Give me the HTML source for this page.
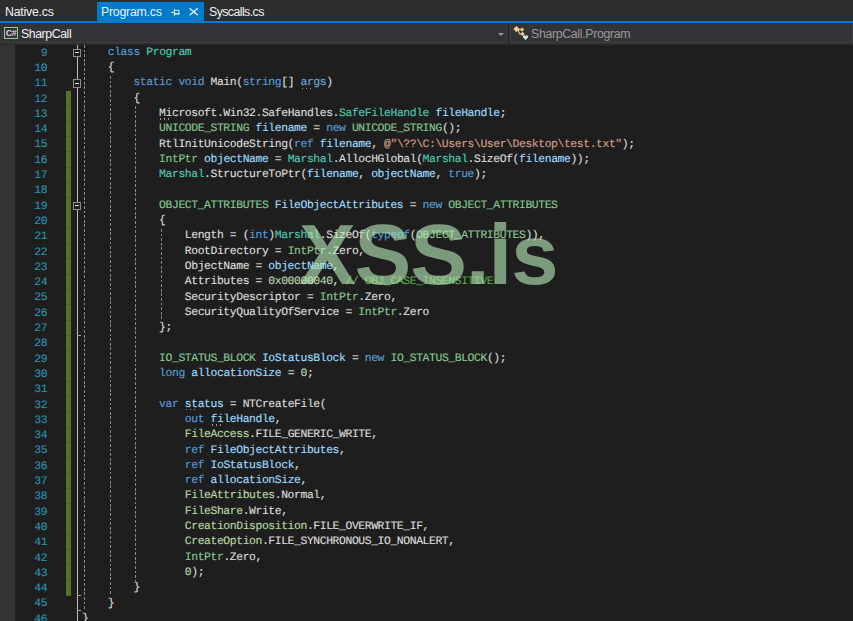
<!DOCTYPE html>
<html><head><meta charset="utf-8"><title>SharpCall</title>
<style>
html,body{margin:0;padding:0}
body{width:853px;height:621px;overflow:hidden;background:#1e1e1e;position:relative;font-family:"Liberation Sans",sans-serif}
#tabs{position:absolute;left:0;top:0;width:853px;height:21px;background:#2d2d30}
#blue{position:absolute;left:0;top:20.6px;width:853px;height:2.6px;background:#007acc}
.tab{position:absolute;top:2px;height:19px;font-size:12.3px;letter-spacing:-0.22px;line-height:20px;color:#f1f1f1;white-space:nowrap}
#tab2{left:97px;width:107px;background:#007acc}
#nav{position:absolute;left:0;top:23.2px;width:853px;height:21.7px;background:#2d2d30}
.combo{position:absolute;top:0.4px;height:19.8px;background:#333337;border:1px solid #3f3f44;border-top-color:#333337;box-sizing:border-box}
.navt{position:absolute;top:0.8px;font-size:12.3px;line-height:20px;white-space:nowrap}
#margin{position:absolute;left:0;top:44.9px;width:15px;height:577px;background:#333333}
#green{position:absolute;left:66px;top:91px;width:4.6px;height:504.8px;background:repeating-linear-gradient(to bottom,rgba(0,0,0,0) 0,rgba(0,0,0,0) 14.4px,rgba(0,0,0,0.13) 14.4px,rgba(0,0,0,0.13) 15.3px),#547229}
#oline{position:absolute;left:77px;top:44.9px;width:1px;height:577px;background:#bdbdbd}
.guide{position:absolute;width:1px;background:repeating-linear-gradient(to bottom,#8c8c8c 0,#8c8c8c 2.8px,transparent 2.8px,transparent 4.6px)}
.box{position:absolute;left:72.8px;width:8.5px;height:8.5px;box-sizing:border-box;border:1px solid #8f8b8b;background:#1e1e1e}
.box i{position:absolute;left:1.3px;top:2.7px;width:4px;height:1.1px;background:#e0e0e0}
.tick{position:absolute;left:77px;width:4px;height:1px;background:#a0a0a0}
.ln,.cl{position:absolute;font-family:"Liberation Mono",monospace;font-size:11.4px;line-height:15.3px;height:15.3px;letter-spacing:-0.41px;white-space:pre;text-rendering:geometricPrecision;-webkit-text-stroke:0.15px}
.ln{left:15px;width:32.2px;text-align:right;color:#2b91af}
.cl{left:82px;color:#dcdcdc}
.k{color:#569cd6}.t{color:#4ec9b0}.s{color:#86c691}.e{color:#b8d7a3}.v{color:#9cdcfe}.d{color:#dcdcdc}
.str{color:#d69d85}.n{color:#b5cea8}.c{color:#57a64a}
.fu{color:#6ea6d3}
.du{color:#dcdcdc}
.vu{color:#9cdcfe}
.dots{position:absolute;width:10px;height:1.2px;background:repeating-linear-gradient(to right,#9a9a9a 0,#9a9a9a 1.4px,transparent 1.4px,transparent 3.95px)}
#wm{position:absolute;left:298.9px;top:205.4px;font-family:"Liberation Sans",sans-serif;font-weight:bold;font-size:85px;line-height:100px;color:rgba(187,237,187,0.6);white-space:nowrap;letter-spacing:-1px}
</style></head><body>
<div id="tabs">
 <div class="tab" style="left:5px">Native.cs</div>
 <div class="tab" id="tab2"><span style="position:absolute;left:4px">Program.cs</span>
  <svg style="position:absolute;left:73px;top:6px" width="10" height="9" viewBox="0 0 10 9"><path d="M1 4.3 H4.4 M4.4 1.1 V7.8 M4.4 2.3 H8.9 V6.5" stroke="#f1f1f1" stroke-width="1" fill="none"/><path d="M4.4 5.9 H9.4" stroke="#f1f1f1" stroke-width="1.4" fill="none"/></svg>
  <svg style="position:absolute;left:92.3px;top:6.2px" width="9.4" height="7.6" viewBox="0 0 9.4 7.6"><path d="M0.6 0.3 L8.8 7.3 M8.8 0.3 L0.6 7.3" stroke="#f1f1f1" stroke-width="1.4" fill="none"/></svg>
 </div>
 <div class="tab" style="left:209px;letter-spacing:-0.55px">Syscalls.cs</div>
</div>
<div id="blue"></div>
<div id="nav">
 <div class="combo" style="left:1px;width:506px"></div>
 <div class="combo" style="left:510px;width:343px"></div>
 <div style="position:absolute;left:4px;top:4px;width:14px;height:11.4px;box-sizing:border-box;border:1px solid #8fce8c;font-size:9px;line-height:10.5px;color:#d8d8d8;text-align:center;font-weight:bold;letter-spacing:-0.45px;overflow:hidden">C#</div>
 <div class="navt" style="left:21px;color:#f1f1f1;letter-spacing:-0.42px">SharpCall</div>
 <svg style="position:absolute;left:498px;top:9.8px" width="6" height="3" viewBox="0 0 6 3"><path d="M0 0 H6 L3 3 Z" fill="#999"/></svg>
 <svg style="position:absolute;left:512px;top:1.8px" width="18" height="17" viewBox="0 0 18 17">
  <path d="M6.5 5 L7.2 8.9 H9 M7 4.6 H8.5" stroke="#f3dfb0" stroke-width="1" fill="none"/>
  <path d="M4.5 0.9 L7.7 4.1 L4.5 7.3 L1.3 4.1 Z M10 2.4 L12.2 4.6 L10 6.8 L7.8 4.6 Z M10.5 6.7 L12.7 8.9 L10.5 11.1 L8.3 8.9 Z" fill="#f0cd8e"/>
  <path d="M13.5 15 L10.9 12.2 Q10.7 10.2 12.3 10.2 Q13.2 10.2 13.5 11.2 Q13.8 10.2 14.7 10.2 Q16.3 10.2 16.1 12.2 Z" fill="#d3e9e2"/>
 </svg>
 <div class="navt" style="left:531px;color:#999;letter-spacing:-0.31px">SharpCall.Program</div>
</div>
<div id="margin"></div>
<div id="green"></div>
<div id="oline"></div>
<div class="guide" style="left:83.5px;top:45.0px;height:566.2px"></div>
<div class="guide" style="left:109.5px;top:75.7px;height:518.2px"></div>
<div class="guide" style="left:135.0px;top:106.3px;height:475.1px"></div>
<div class="guide" style="left:160.8px;top:228.7px;height:91.8px"></div>
<div class="box" style="top:48.5px"><i></i></div>
<div class="box" style="top:79.1px"><i></i></div>
<div class="box" style="top:201.5px"><i></i></div>
<div class="tick" style="top:335.0px"></div>
<div class="tick" style="top:595.1px"></div>
<div class="tick" style="top:610.4px"></div>
<div class="dots" style="left:301.8px;top:87.8px"></div>
<div class="dots" style="left:160.4px;top:118.4px"></div>
<div class="dots" style="left:186.1px;top:409.1px"></div>
<div class="dots" style="left:211.8px;top:424.4px"></div>

<div class="ln" style="top:46.60px">9</div><div class="cl" style="top:45.70px"><span class="k">    class</span><span class="d"> </span><span class="t">Program</span></div>
<div class="ln" style="top:61.90px">10</div><div class="cl" style="top:61.00px"><span class="d">    {</span></div>
<div class="ln" style="top:77.20px">11</div><div class="cl" style="top:76.30px"><span class="k">        static void</span><span class="d"> Main(</span><span class="k">string</span><span class="d">[] </span><span class="fu">args</span><span class="d">)</span></div>
<div class="ln" style="top:92.50px">12</div><div class="cl" style="top:91.60px"><span class="d">        {</span></div>
<div class="ln" style="top:107.80px">13</div><div class="cl" style="top:106.90px"><span class="d">            </span><span class="du">Mi</span><span class="d">crosoft.Win32.SafeHandles.</span><span class="t">SafeFileHandle</span><span class="d"> </span><span class="v">fileHandle</span><span class="d">;</span></div>
<div class="ln" style="top:123.10px">14</div><div class="cl" style="top:122.20px"><span class="s">            UNICODE_STRING</span><span class="d"> </span><span class="v">filename</span><span class="d"> = </span><span class="k">new</span><span class="d"> </span><span class="s">UNICODE_STRING</span><span class="d">();</span></div>
<div class="ln" style="top:138.40px">15</div><div class="cl" style="top:137.50px"><span class="d">            RtlInitUnicodeString(</span><span class="k">ref</span><span class="d"> </span><span class="v">filename</span><span class="d">, </span><span class="str">@&quot;\??\C:\Users\User\Desktop\test.txt&quot;</span><span class="d">);</span></div>
<div class="ln" style="top:153.70px">16</div><div class="cl" style="top:152.80px"><span class="s">            IntPtr</span><span class="d"> </span><span class="v">objectName</span><span class="d"> = </span><span class="t">Marshal</span><span class="d">.AllocHGlobal(</span><span class="t">Marshal</span><span class="d">.SizeOf(</span><span class="v">filename</span><span class="d">));</span></div>
<div class="ln" style="top:169.00px">17</div><div class="cl" style="top:168.10px"><span class="t">            Marshal</span><span class="d">.StructureToPtr(</span><span class="v">filename</span><span class="d">, </span><span class="v">objectName</span><span class="d">, </span><span class="k">true</span><span class="d">);</span></div>
<div class="ln" style="top:184.30px">18</div><div class="cl" style="top:183.40px"></div>
<div class="ln" style="top:199.60px">19</div><div class="cl" style="top:198.70px"><span class="s">            OBJECT_ATTRIBUTES</span><span class="d"> </span><span class="v">FileObjectAttributes</span><span class="d"> = </span><span class="k">new</span><span class="d"> </span><span class="s">OBJECT_ATTRIBUTES</span></div>
<div class="ln" style="top:214.90px">20</div><div class="cl" style="top:214.00px"><span class="d">            {</span></div>
<div class="ln" style="top:230.20px">21</div><div class="cl" style="top:229.30px"><span class="d">                Length = (</span><span class="k">int</span><span class="d">)</span><span class="t">Marshal</span><span class="d">.SizeOf(</span><span class="k">typeof</span><span class="d">(</span><span class="s">OBJECT_ATTRIBUTES</span><span class="d">)),</span></div>
<div class="ln" style="top:245.50px">22</div><div class="cl" style="top:244.60px"><span class="d">                RootDirectory = </span><span class="s">IntPtr</span><span class="d">.Zero,</span></div>
<div class="ln" style="top:260.80px">23</div><div class="cl" style="top:259.90px"><span class="d">                ObjectName = </span><span class="v">objectName</span><span class="d">,</span></div>
<div class="ln" style="top:276.10px">24</div><div class="cl" style="top:275.20px"><span class="d">                Attributes = </span><span class="n">0x00000040</span><span class="d">, </span><span class="c">// OBJ_CASE_INSENSITIVE</span></div>
<div class="ln" style="top:291.40px">25</div><div class="cl" style="top:290.50px"><span class="d">                SecurityDescriptor = </span><span class="s">IntPtr</span><span class="d">.Zero,</span></div>
<div class="ln" style="top:306.70px">26</div><div class="cl" style="top:305.80px"><span class="d">                SecurityQualityOfService = </span><span class="s">IntPtr</span><span class="d">.Zero</span></div>
<div class="ln" style="top:322.00px">27</div><div class="cl" style="top:321.10px"><span class="d">            };</span></div>
<div class="ln" style="top:337.30px">28</div><div class="cl" style="top:336.40px"></div>
<div class="ln" style="top:352.60px">29</div><div class="cl" style="top:351.70px"><span class="s">            IO_STATUS_BLOCK</span><span class="d"> </span><span class="v">IoStatusBlock</span><span class="d"> = </span><span class="k">new</span><span class="d"> </span><span class="s">IO_STATUS_BLOCK</span><span class="d">();</span></div>
<div class="ln" style="top:367.90px">30</div><div class="cl" style="top:367.00px"><span class="k">            long</span><span class="d"> </span><span class="v">allocationSize</span><span class="d"> = </span><span class="n">0</span><span class="d">;</span></div>
<div class="ln" style="top:383.20px">31</div><div class="cl" style="top:382.30px"></div>
<div class="ln" style="top:398.50px">32</div><div class="cl" style="top:397.60px"><span class="k">            var</span><span class="d"> </span><span class="vu">sta</span><span class="v">tus</span><span class="d"> = NTCreateFile(</span></div>
<div class="ln" style="top:413.80px">33</div><div class="cl" style="top:412.90px"><span class="k">                out</span><span class="d"> </span><span class="vu">fi</span><span class="v">leHandle</span><span class="d">,</span></div>
<div class="ln" style="top:429.10px">34</div><div class="cl" style="top:428.20px"><span class="e">                FileAccess</span><span class="d">.FILE_GENERIC_WRITE,</span></div>
<div class="ln" style="top:444.40px">35</div><div class="cl" style="top:443.50px"><span class="k">                ref</span><span class="d"> </span><span class="v">FileObjectAttributes</span><span class="d">,</span></div>
<div class="ln" style="top:459.70px">36</div><div class="cl" style="top:458.80px"><span class="k">                ref</span><span class="d"> </span><span class="v">IoStatusBlock</span><span class="d">,</span></div>
<div class="ln" style="top:475.00px">37</div><div class="cl" style="top:474.10px"><span class="k">                ref</span><span class="d"> </span><span class="v">allocationSize</span><span class="d">,</span></div>
<div class="ln" style="top:490.30px">38</div><div class="cl" style="top:489.40px"><span class="e">                FileAttributes</span><span class="d">.Normal,</span></div>
<div class="ln" style="top:505.60px">39</div><div class="cl" style="top:504.70px"><span class="e">                FileShare</span><span class="d">.Write,</span></div>
<div class="ln" style="top:520.90px">40</div><div class="cl" style="top:520.00px"><span class="e">                CreationDisposition</span><span class="d">.FILE_OVERWRITE_IF,</span></div>
<div class="ln" style="top:536.20px">41</div><div class="cl" style="top:535.30px"><span class="e">                CreateOption</span><span class="d">.FILE_SYNCHRONOUS_IO_NONALERT,</span></div>
<div class="ln" style="top:551.50px">42</div><div class="cl" style="top:550.60px"><span class="s">                IntPtr</span><span class="d">.Zero,</span></div>
<div class="ln" style="top:566.80px">43</div><div class="cl" style="top:565.90px"><span class="n">                0</span><span class="d">);</span></div>
<div class="ln" style="top:582.10px">44</div><div class="cl" style="top:581.20px"><span class="d">        }</span></div>
<div class="ln" style="top:597.40px">45</div><div class="cl" style="top:596.50px"><span class="d">    }</span></div>
<div class="ln" style="top:612.70px">46</div><div class="cl" style="top:611.80px"><span class="d">}</span></div>
<div id="wm">XSS.is</div>
</body></html>
